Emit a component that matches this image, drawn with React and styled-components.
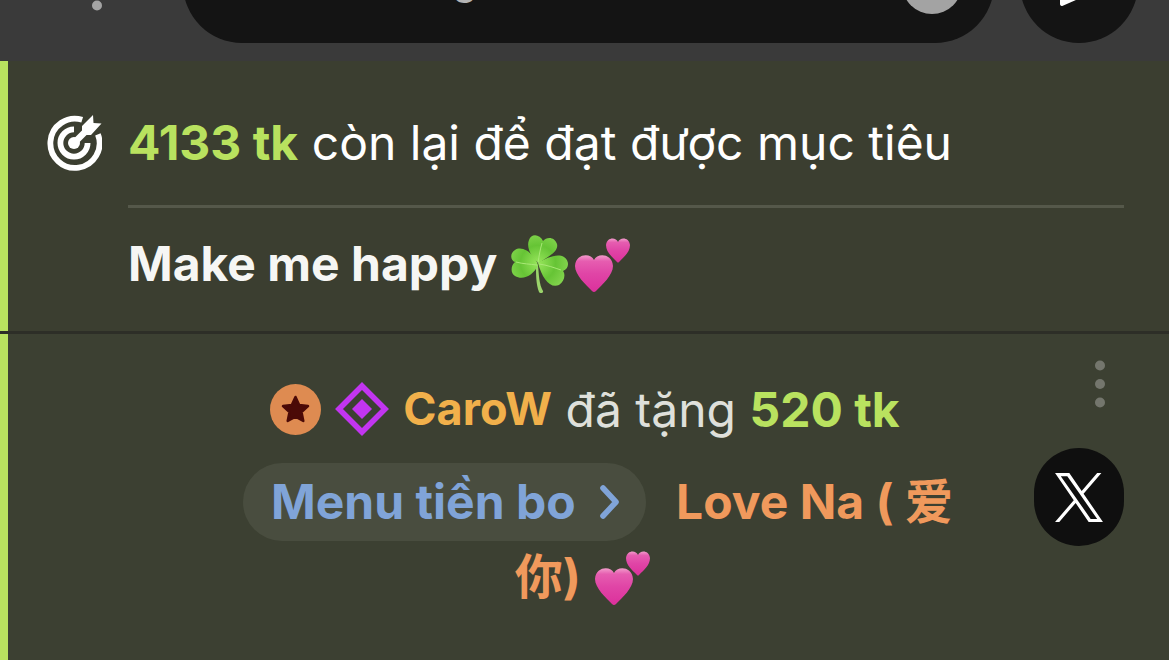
import React from "react";
import styled, { createGlobalStyle } from "styled-components";

const GlobalStyle = createGlobalStyle`
  * {
    box-sizing: border-box;
  }
  body {
    margin: 0;
    background: #3c4032;
    font-family: Inter, "Noto Sans CJK SC", sans-serif;
    font-size: 48px;
    line-height: 72px;
  }
  button {
    padding: 0;
    border: 0;
    background: none;
    font: inherit;
    color: inherit;
    cursor: pointer;
  }
`;

function MoreIcon({ color }) {
  return (
    <svg width="48" height="48" viewBox="0 0 48 48" fill={color}>
      <circle cx="24" cy="5.5" r="5" />
      <circle cx="24" cy="24" r="5" />
      <circle cx="24" cy="42.5" r="5" />
    </svg>
  );
}

function SmileIcon() {
  return (
    <svg width="60" height="60" viewBox="0 0 60 60">
      <circle cx="30" cy="30" r="30" fill="#a3a3a3" />
      <circle cx="20" cy="23" r="4" fill="#141414" />
      <circle cx="40" cy="23" r="4" fill="#141414" />
    </svg>
  );
}

function SendIcon() {
  return (
    <svg width="60" height="48" viewBox="0 0 60 48">
      <path
        d="M13 4L58 24L13 44L13 29L34 24L13 19Z"
        fill="#fff"
        stroke="#fff"
        strokeWidth="4"
        strokeLinejoin="round"
      />
    </svg>
  );
}

function GoalIcon() {
  return (
    <svg width="56" height="72" viewBox="-28 -28 56 56">
      <g fill="none" stroke="#fff" strokeWidth="5.8">
        <path d="M8.2 -23.2A24.6 24.6 0 1 0 23.9 -8.6" />
        <path d="M0 -13.6A13.6 13.6 0 1 0 13.6 0" />
        <path d="M0 0L12 -12" strokeWidth="6.6" />
      </g>
      <circle r="6" fill="#fff" />
      <path d="M8 -17L19 -28L19.5 -20L27.5 -19.5L17 -8L8 -8Z" fill="#fff" />
    </svg>
  );
}

function StarBadge() {
  return (
    <svg width="51" height="51" viewBox="0 0 51 51">
      <circle cx="25.5" cy="25.5" r="25.5" fill="#de8b51" />
      <path
        d="M25.5 13L29.2 21L38 22L31.5 28L33.3 37L25.5 32.6L17.7 37L19.5 28L13 22L21.8 21Z"
        fill="#4b0a07"
        stroke="#4b0a07"
        strokeWidth="2.5"
        strokeLinejoin="round"
      />
    </svg>
  );
}

function DiamondBadge() {
  return (
    <svg width="54" height="54" viewBox="-27 -27 54 54">
      <path d="M0 -23L23 0L0 23L-23 0Z" fill="none" stroke="#c235f0" strokeWidth="5.6" />
      <path d="M0 -10L10 0L0 10L-10 0Z" fill="#c235f0" />
    </svg>
  );
}

function ChevronIcon() {
  return (
    <svg width="24" height="36" viewBox="0 0 24 36">
      <path
        d="M5 4L18 18L5 32"
        fill="none"
        stroke="currentColor"
        strokeWidth="5.6"
        strokeLinecap="round"
        strokeLinejoin="round"
      />
    </svg>
  );
}

function XLogo() {
  return (
    <svg width="48" height="49" viewBox="0 0 1200 1227">
      <path
        d="M714.163 519.284L1160.89 0H1055.03L667.137 450.887L357.328 0H0L468.492 681.821L0 1226.37H105.866L515.491 750.218L842.672 1226.37H1200L714.137 519.284H714.163ZM569.165 687.828L521.697 619.934L144.011 79.6944H306.615L611.412 515.685L658.88 583.579L1055.08 1150.3H892.476L569.165 687.854V687.828Z"
        fill="#fff"
      />
    </svg>
  );
}

function Shamrock() {
  return (
    <Emoji viewBox="0 0 60 60" role="img" aria-label="shamrock">
      <defs>
        <radialGradient id="leaf" gradientUnits="userSpaceOnUse" cx="29" cy="28" r="32">
          <stop offset="0" stopColor="#98e65c" />
          <stop offset="0.55" stopColor="#66c435" />
          <stop offset="1" stopColor="#86d650" />
        </radialGradient>
      </defs>
      <path d="M27 30C27 40 27 49 30 57C31 59 35 58 34 56C30 49 30 40 29 30Z" fill="#9bd46b" />
      <g fill="url(#leaf)">
        <path d="M30 28C22 23 17 12 20 5C22 -2 31 -1 34 6C38 1 46 2 48 9C50 17 38 22 30 28Z" />
        <path d="M29 30C25 18 13 10 6 15C1 18 1 25 6 27C2 30 1 38 6 41C14 46 25 40 29 30Z" />
        <path d="M29 28C37 23 48 18 55 22C61 26 60 34 54 36C57 40 55 47 50 50C41 54 33 43 29 28Z" />
      </g>
      <g fill="none" stroke="#a9e876" strokeWidth="1">
        <path d="M29 28C30 21 31 15 33 8" />
        <path d="M28 30C21 29 14 29 7 27" />
        <path d="M30 29C38 30 46 33 52 35" />
      </g>
    </Emoji>
  );
}

function TwoHearts({ id }) {
  return (
    <Emoji viewBox="0 0 60 60" role="img" aria-label="two hearts">
      <defs>
        <linearGradient id={id} x1="0" y1="0" x2="0" y2="1">
          <stop offset="0" stopColor="#f29bcb" />
          <stop offset="0.16" stopColor="#e65db0" />
          <stop offset="0.5" stopColor="#e045a6" />
          <stop offset="1" stopColor="#dc309c" />
        </linearGradient>
      </defs>
      <g fill={`url(#${id})`}>
        <path d="M22 25C19 18 4 18 3 31C3 40 14 50 20 56Q22 58 24 56C30 50 41 40 41 31C40 18 25 18 22 25Z" />
        <path d="M46 7C44 2 35 2 34 10C34 17 40 22 45 27Q46 28 47 27C52 22 58 17 58 10C57 2 48 2 46 7Z" />
      </g>
    </Emoji>
  );
}

function App() {
  return (
    <>
      <GlobalStyle />
      <Toolbar>
        <MoreButton aria-label="More options">
          <MoreIcon color="#a3a3a3" />
        </MoreButton>
        <MessageBox>
          <MessageInput type="text" placeholder="Tin nhắn công khai" aria-label="Tin nhắn công khai" />
          <button aria-label="Emoji">
            <SmileIcon />
          </button>
        </MessageBox>
        <SendButton aria-label="Send">
          <SendIcon />
        </SendButton>
      </Toolbar>

      <Messages>
        <GoalMessage>
          <GoalIcon />
          <GoalBody>
            <GoalStatus>
              <Tokens>4133 tk</Tokens> còn lại để đạt được mục tiêu
            </GoalStatus>
            <GoalTitle>
              Make me happy <Shamrock />
              <TwoHearts id="heart-goal" />
            </GoalTitle>
          </GoalBody>
        </GoalMessage>

        <TipMessage>
          <TipBody>
            <User>
              <StarBadge />
              <DiamondBadge />
              CaroW
            </User>{" "}
            đã tặng <Tokens>520 tk</Tokens>{" "}
            <MenuButton>
              Menu tiền bo
              <ChevronIcon />
            </MenuButton>{" "}
            <TipName>
              Love Na ( 爱你) <TwoHearts id="heart-tip" />
            </TipName>
          </TipBody>
          <Actions>
            <button aria-label="Message options">
              <MoreIcon color="#74766d" />
            </button>
            <ShareButton aria-label="Share on X">
              <XLogo />
            </ShareButton>
          </Actions>
        </TipMessage>
      </Messages>
    </>
  );
}
export default App;

const Toolbar = styled.header`
  height: 61px;
  padding: 0 31px 18px 73px;
  display: flex;
  align-items: flex-end;
  overflow: hidden;
  background: #3a3a3a;

  svg {
    display: block;
  }
`;

const MoreButton = styled.button`
  height: 112px;
  margin-right: 62px;
`;

const MessageBox = styled.div`
  flex: 1;
  min-width: 0;
  height: 118px;
  padding: 0 32px 0 24px;
  display: flex;
  align-items: center;
  border-radius: 59px;
  background: #141414;
`;

const MessageInput = styled.input`
  flex: 1;
  min-width: 0;
  height: 118px;
  padding: 0 0 10px;
  border: 0;
  outline: 0;
  background: none;
  color: #fff;
  font: inherit;
  font-size: 40px;

  &::placeholder {
    color: #b4b4b4;
    opacity: 1;
  }
`;

const SendButton = styled.button`
  && {
    flex: none;
    width: 118px;
    height: 118px;
    margin-left: 26px;
    display: flex;
    align-items: center;
    justify-content: center;
    border-radius: 50%;
    background: #141414;
  }
`;

const Messages = styled.main`
  display: flex;
  flex-direction: column;
  gap: 3px;
  background: #2d2e27;
`;

const Message = styled.article`
  display: flex;
  border-left: 8px solid #b9e25f;
  color: #fff;
`;

const GoalMessage = styled(Message)`
  gap: 26px;
  padding: 46px 45px 31px 38px;
  background: #3b3e30;
`;

const GoalBody = styled.div`
  flex: 1;
`;

const GoalStatus = styled.div`
  padding-bottom: 26px;
  border-bottom: 3px solid #55584a;
`;

const GoalTitle = styled.div`
  padding-top: 20px;
  font-weight: 700;
  color: #f6f6f4;
`;

const Tokens = styled.span`
  font-weight: 700;
  color: #b9e25f;
`;

const TipMessage = styled(Message)`
  min-height: 326px;
  padding: 26px 45px 26px 128px;
  background: #3c4032;
  color: #dfe0db;
`;

const TipBody = styled.div`
  flex: 1;
  max-width: 760px;
  margin: 0 auto;
  padding-top: 14px;
  text-align: center;
`;

const User = styled.span`
  height: 70px;
  display: inline-flex;
  align-items: center;
  gap: 14px;
  vertical-align: top;
  font-size: 45px;
  font-weight: 700;
  color: #f1b04b;
`;

const MenuButton = styled.button`
  && {
    height: 78px;
    margin: 17px 17px 0 26px;
    padding: 0 24px 0 28px;
    display: inline-flex;
    align-items: center;
    gap: 22px;
    border-radius: 39px;
    background: #494d3f;
    color: #80a4d8;
    font-weight: 700;
  }
`;

const TipName = styled.span`
  font-weight: 700;
  color: #f0995c;
`;

const Actions = styled.div`
  width: 90px;
  display: flex;
  flex-direction: column;
  align-items: flex-end;
  gap: 40px;

  svg {
    display: block;
  }
`;

const ShareButton = styled.button`
  && {
    width: 90px;
    height: 98px;
    display: flex;
    align-items: center;
    justify-content: center;
    border-radius: 45px;
    background: #0f0f0f;
  }
`;

const Emoji = styled.svg`
  width: 60px;
  height: 60px;
  margin-right: 3px;
  vertical-align: -14px;
`;
